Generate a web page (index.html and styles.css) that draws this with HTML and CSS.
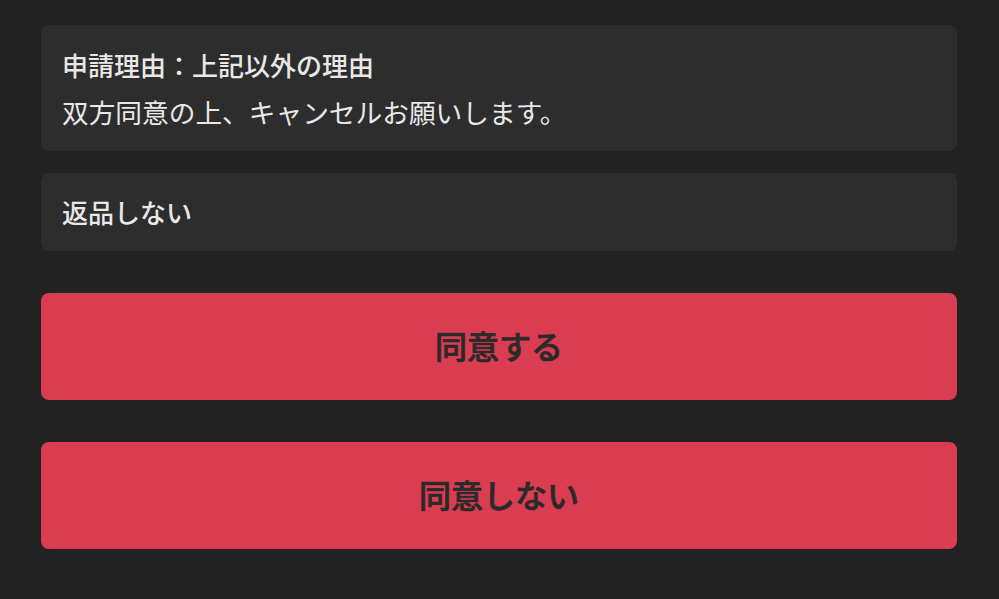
FILE: index.html
```html
<!DOCTYPE html>
<html lang="ja">
<head>
    <meta charset="UTF-8">
    <meta name="viewport" content="width=device-width, initial-scale=1.0">
    <title>キャンセル申請</title>
    <link rel="stylesheet" href="styles.css">
</head>
<body>

    <div class="container">
        <div class="card">
            <p class="card-title">申請理由：上記以外の理由</p>
            <p class="card-text">双方同意の上、キャンセルお願いします。</p>
        </div>

        <div class="card card-single">
            <p class="card-title">返品しない</p>
        </div>

        <button class="btn">同意する</button>
        <button class="btn">同意しない</button>
    </div>

</body>
</html>
```

FILE: styles.css
```css
body {
    margin: 0;
    background-color: #222222;
    font-family: "Noto Sans CJK JP", "Noto Sans", sans-serif;
    color: #e8e8e8;
}
.container {
    display: flex;
    flex-direction: column;
    padding: 25px 42px 0 41px;
}
.card {
    background-color: #2d2d2d;
    border-radius: 8px;
    padding: 20px 21px;
    margin-bottom: 22px;
}
.card p {
    margin: 0;
    font-size: 26px;
    line-height: 39px;
}
.card-title {
    font-weight: 500;
}
.card .card-text {
    margin-top: 8px;
    font-size: 26.7px;
    font-weight: 400;
}
.card-single {
    padding: 19px 21px 20px;
}
.btn {
    height: 107px;
    margin-top: 20px;
    margin-bottom: 22px;
    padding: 0 0 3px;
    border: none;
    border-radius: 8px;
    background-color: #da3d51;
    color: #2a2a2a;
    font-family: "Noto Sans CJK JP", "Noto Sans", sans-serif;
    font-size: 32px;
    font-weight: 500;
    -webkit-text-stroke: 0.7px #2a2a2a;
    cursor: pointer;
}
```
